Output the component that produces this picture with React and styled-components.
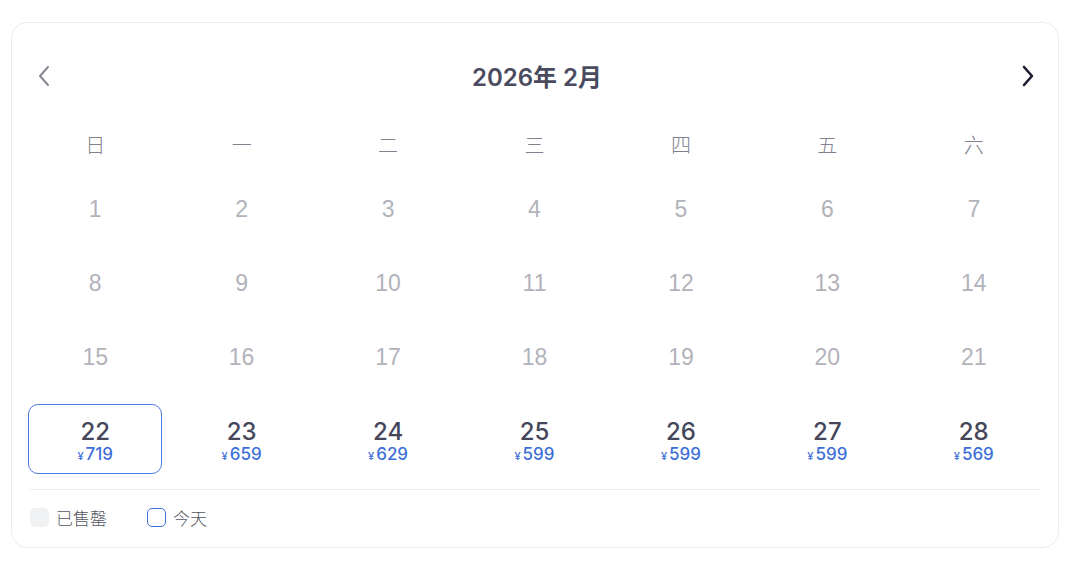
import React from 'react'
import styled, { createGlobalStyle } from 'styled-components'

const GlobalStyle = createGlobalStyle`
    body {
        margin: 0;
        background: #ffffff;
        font-family: "Liberation Sans", "Noto Sans CJK SC", sans-serif;
    }
`

const StCard = styled.div`
    box-sizing: border-box;
    margin: 22px 0 0 11px;
    width: 1048px;
    height: 526px;
    border: 1px solid #ececee;
    border-radius: 16px;
    background: #fff;
    display: flex;
    flex-direction: column;
`

const StHeader = styled.div`
    box-sizing: border-box;
    height: 105px;
    display: flex;
    align-items: center;
    justify-content: space-between;
    padding: 0 22px 0 24px;
`

const StArrowBtn = styled.button`
    width: 16px;
    height: 24px;
    padding: 0;
    border: none;
    background: none;
    display: flex;
    align-items: center;
    justify-content: center;
    color: ${(p) => (p.$dark ? '#1b1b2f' : '#868791')};
    cursor: pointer;
`

const StTitle = styled.div`
    font-family: Inter, "Noto Sans CJK SC", sans-serif;
    font-size: 24px;
    font-weight: 600;
    color: #4a4b5f;
    margin-left: 2px;
`

const StGrid = styled.div`
    display: grid;
    grid-template-columns: repeat(7, 1fr);
    padding: 0 11px 0 10px;
`

const StWeekday = styled.div`
    height: 32px;
    margin-bottom: 12px;
    display: flex;
    align-items: center;
    justify-content: center;
    font-family: "Noto Sans CJK SC", sans-serif;
    font-size: 20px;
    font-weight: 300;
    color: #80818c;
`

const StDay = styled.div`
    height: 74px;
    display: flex;
    align-items: center;
    justify-content: center;
    font-size: 23px;
    color: #b2b3ba;
`

const StPriceCell = styled.div`
    height: 86px;
    padding: 10px 6px 6px;
    box-sizing: border-box;
`

const StPriceBox = styled.div`
    box-sizing: border-box;
    height: 70px;
    padding-top: 7px;
    border: ${(p) => (p.$selected ? '1.5px solid #4a7be0' : '1.5px solid transparent')};
    border-radius: 10px;
    display: flex;
    flex-direction: column;
    align-items: center;
    justify-content: center;
`

const StDayNum = styled.div`
    font-family: Inter, "Liberation Sans", sans-serif;
    font-size: 24px;
    line-height: 24px;
    font-weight: 500;
    color: #45465a;
`

const StPrice = styled.div`
    font-family: Inter, "Liberation Sans", sans-serif;
    font-size: 17px;
    line-height: 20px;
    font-weight: 500;
    color: #3e6fd8;
    display: flex;
    align-items: baseline;
`

const StYen = styled.span`
    font-size: 11px;
    margin-right: 2px;
`

const StFooter = styled.div`
    margin: 9px 17px 0 17px;
    border-top: 1px solid #eeeef0;
    flex: 1;
    display: flex;
    align-items: center;
    gap: 40px;
    padding: 0 0 2px 1px;
`

const StLegend = styled.div`
    display: flex;
    align-items: center;
    gap: 7px;
    font-family: "Noto Sans CJK SC", sans-serif;
    font-size: 17px;
    font-weight: 300;
    color: #55565f;
`

const StSwatch = styled.span`
    box-sizing: border-box;
    width: 19px;
    height: 19px;
    border-radius: 5px;
    background: ${(p) => (p.$outline ? '#fff' : '#f0f1f3')};
    border: ${(p) => (p.$outline ? '1.5px solid #3f6fd8' : 'none')};
`

const weekdays = ['日', '一', '二', '三', '四', '五', '六']
const prices = [
    { day: 22, price: 719, selected: true },
    { day: 23, price: 659 },
    { day: 24, price: 629 },
    { day: 25, price: 599 },
    { day: 26, price: 599 },
    { day: 27, price: 599 },
    { day: 28, price: 569 },
]

const Chevron = ({ dir }) => (
    <svg width="14" height="22" viewBox="0 0 14 22" fill="none">
        {dir === 'left'
            ? <path d="M11 2 L3 11 L11 20" stroke="currentColor" strokeWidth="2" strokeLinecap="round" strokeLinejoin="round" />
            : <path d="M3 2 L11 11 L3 20" stroke="currentColor" strokeWidth="2.6" strokeLinecap="round" strokeLinejoin="round" />}
    </svg>
)

const App = () => {
    const greyDays = Array.from({ length: 21 }, (_, i) => i + 1)

    return (
        <>
            <GlobalStyle />
            <StCard>
                <StHeader>
                    <StArrowBtn><Chevron dir="left" /></StArrowBtn>
                    <StTitle>2026年 2月</StTitle>
                    <StArrowBtn $dark><Chevron dir="right" /></StArrowBtn>
                </StHeader>
                <StGrid>
                    {weekdays.map((w) => <StWeekday key={w}>{w}</StWeekday>)}
                    {greyDays.map((d) => <StDay key={d}>{d}</StDay>)}
                    {prices.map((p) => (
                        <StPriceCell key={p.day}>
                            <StPriceBox $selected={p.selected}>
                                <StDayNum>{p.day}</StDayNum>
                                <StPrice><StYen>¥</StYen>{p.price}</StPrice>
                            </StPriceBox>
                        </StPriceCell>
                    ))}
                </StGrid>
                <StFooter>
                    <StLegend><StSwatch />已售罄</StLegend>
                    <StLegend><StSwatch $outline />今天</StLegend>
                </StFooter>
            </StCard>
        </>
    )
}

export default App
